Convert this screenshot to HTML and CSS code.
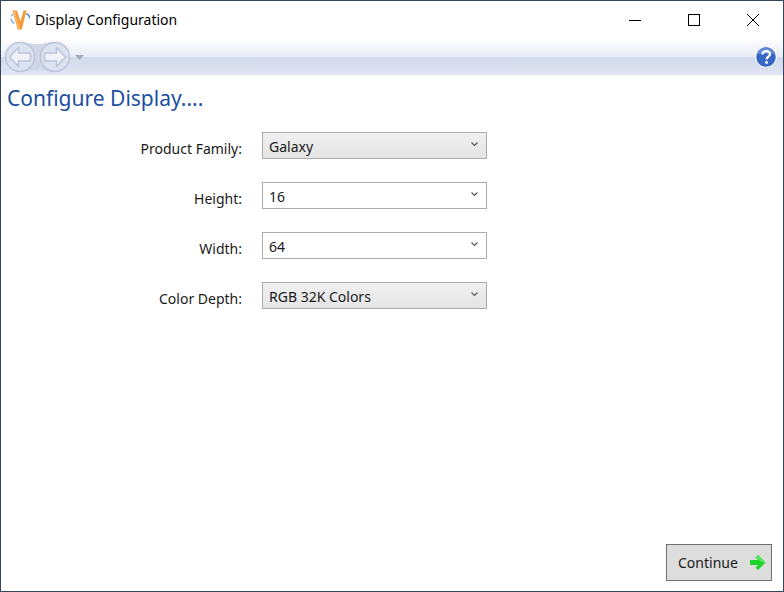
FILE: index.html
```html
<!DOCTYPE html>
<html lang="en">
<head>
<meta charset="utf-8">
<title>Display Configuration</title>
<link rel="stylesheet" href="styles.css">
</head>
<body>
<div class="window">
  <header class="titlebar">
    <svg class="app-icon" width="22" height="24" viewBox="0 0 22 24">
      <path d="M2 10.500c0 2.500 1.500 4 3.500 5M2.500 8l1.500-2" fill="none" stroke="#7fa6d0" stroke-width="1.300"/>
      <path d="M17 6c2.500 0 3.500 2 3.500 4.500" fill="none" stroke="#5a8cc0" stroke-width="1.300"/>
      <path d="M3.500 2.500h4.500l3.500 11 3-11h3l-4.800 19h-4z" fill="#f59a35"/>
      <path d="M3.500 2.500h2.500l5 19h-1.500z" fill="#f9b566"/>
    </svg>
    <span class="title">Display Configuration</span>
    <div class="caption-buttons">
      <svg width="12" height="12" viewBox="0 0 12 12"><path d="M0 6.500h12" stroke="#000" fill="none"/></svg>
      <svg width="12" height="12" viewBox="0 0 12 12"><rect x=".5" y=".5" width="11" height="11" stroke="#000" fill="none"/></svg>
      <svg width="12" height="12" viewBox="0 0 12 12"><path d="M0 0l12 12M12 0L0 12" stroke="#000" fill="none"/></svg>
    </div>
  </header>
  <nav class="navbar">
    <svg class="nav-buttons" width="84" height="34" viewBox="0 0 84 34">
      <path d="M18 2c6 0 9 2 17 2s11-2 17-2v30c-6 0-9-2-17-2s-11 2-17 2z" fill="#d0d7e9"/>
      <circle cx="18" cy="17" r="14.500" fill="#dde2f0" stroke="#bcc4db" stroke-width="1.500"/>
      <circle cx="53" cy="17" r="14.500" fill="#dde2f0" stroke="#bcc4db" stroke-width="1.500"/>
      <path d="M7.500 17l9-9.500v5.500h10.500a1.500 1.500 0 0 1 1.500 1.500v5a1.500 1.500 0 0 1-1.500 1.500H16.500v5.500z" fill="#f0f2f9" stroke="#bcc4db" stroke-width="1.500" stroke-linejoin="round"/>
      <path d="M63.500 17l-9-9.500v5.500H44a1.500 1.500 0 0 0-1.500 1.500v5a1.500 1.500 0 0 0 1.500 1.500h10.500v5.500z" fill="#f0f2f9" stroke="#bcc4db" stroke-width="1.500" stroke-linejoin="round"/>
      <path d="M73 15h9l-4.500 5z" fill="#a5abba"/>
    </svg>
    <svg class="help" width="24" height="24" viewBox="0 0 24 24">
      <circle cx="12" cy="12.500" r="11" fill="#9aa6c0"/>
      <circle cx="12" cy="12" r="10.500" fill="#3566c6" stroke="#f4f6fb" stroke-width="1.500"/>
      <path d="M12 2.500a9.500 9.500 0 0 1 9 6.500H3a9.500 9.500 0 0 1 9-6.500z" fill="#5f88d6"/>
      <path d="M8.500 9.500c0-4.500 7.500-4.500 7.500-.5 0 3-3.500 2.500-3.500 5.500" fill="none" stroke="#fff" stroke-width="2.200"/>
      <circle cx="12.500" cy="17.500" r="1.400" fill="#fff"/>
    </svg>
  </nav>
  <main class="content">
    <h1 class="heading">Configure Display....</h1>
    <div class="form">
      <div class="row">
        <label class="label">Product Family:</label>
        <div class="select filled"><span>Galaxy</span><svg class="chev" width="7" height="5" viewBox="0 0 7 5"><path d="M.5.500L3.500 3.500 6.500.500" fill="none" stroke="#555" stroke-width="1.100"/></svg></div>
      </div>
      <div class="row">
        <label class="label">Height:</label>
        <div class="select"><span>16</span><svg class="chev" width="7" height="5" viewBox="0 0 7 5"><path d="M.5.500L3.500 3.500 6.500.500" fill="none" stroke="#555" stroke-width="1.100"/></svg></div>
      </div>
      <div class="row">
        <label class="label">Width:</label>
        <div class="select"><span>64</span><svg class="chev" width="7" height="5" viewBox="0 0 7 5"><path d="M.5.500L3.500 3.500 6.500.500" fill="none" stroke="#555" stroke-width="1.100"/></svg></div>
      </div>
      <div class="row">
        <label class="label">Color Depth:</label>
        <div class="select filled"><span>RGB 32K Colors</span><svg class="chev" width="7" height="5" viewBox="0 0 7 5"><path d="M.5.500L3.500 3.500 6.500.500" fill="none" stroke="#555" stroke-width="1.100"/></svg></div>
      </div>
    </div>
    <div class="footer">
      <button class="continue" type="button">
        <span>Continue</span>
        <svg width="17" height="17" viewBox="0 0 17 17"><path d="M9 1l7.500 7.500-7.500 7.500-2.500-2.500 2.500-2.500H1V6h8L6.500 3.500z" fill="#1fd42b"/><path d="M9 1l7.500 7.500h-3L6.500 3.500z" fill="#4fe85a"/></svg>
      </button>
    </div>
  </main>
</div>
</body>
</html>
```

FILE: styles.css
```css
* { box-sizing: border-box; }
html, body { margin: 0; padding: 0; background: #fff; }
body { font-family: "Noto Sans", "Open Sans", sans-serif; color: #1a1a1a; }
.window {
  width: 784px;
  height: 592px;
  border: 1px solid #36465a;
  display: flex;
  flex-direction: column;
  background: #fff;
}
.titlebar {
  height: 37px;
  flex: none;
  display: flex;
  align-items: center;
  padding: 0 0 0 8px;
}
.app-icon { flex: none; margin-right: 4px; }
.title { font-size: 14px; color: #000; }
.caption-buttons {
  margin-left: auto;
  display: flex;
  gap: 47px;
  padding: 1px 24px 0 0;
}
.navbar {
  height: 37px;
  flex: none;
  display: flex;
  align-items: center;
  justify-content: space-between;
  padding: 0 5px 0 1px;
  background: linear-gradient(#ffffff 0, #e9ecf6 51%, #d1d9ea 51%, #e1e5f3 100%);
}
.help { flex: none; }
.content {
  flex: 1;
  display: flex;
  flex-direction: column;
  padding: 9px 11px 10px 6px;
}
.heading {
  margin: 0;
  font-size: 21px;
  font-weight: 400;
  line-height: 28px;
  color: #1b50a0;
}
.form {
  margin-top: 20px;
  display: flex;
  flex-direction: column;
  gap: 23px;
}
.row { display: flex; align-items: center; }
.label {
  width: 235px;
  text-align: right;
  font-size: 14px;
  padding-top: 6px;
}
.select {
  margin-left: 20px;
  width: 225px;
  height: 27px;
  border: 1px solid #acacac;
  background: #fff;
  display: flex;
  align-items: center;
  justify-content: space-between;
  padding: 2px 8px 0 6px;
  font-size: 14px;
}
.select.filled { background: linear-gradient(#f0f0f0, #e5e5e5); }
.chev { margin-top: -5px; }
.footer {
  margin-top: auto;
  display: flex;
  justify-content: flex-end;
}
.continue {
  width: 106px;
  height: 37px;
  border: 1px solid #707070;
  background: #dddddd;
  display: flex;
  align-items: center;
  justify-content: space-between;
  padding: 0 5px 0 11px;
  font: inherit;
  font-size: 14px;
  color: #1a1a1a;
}
```
